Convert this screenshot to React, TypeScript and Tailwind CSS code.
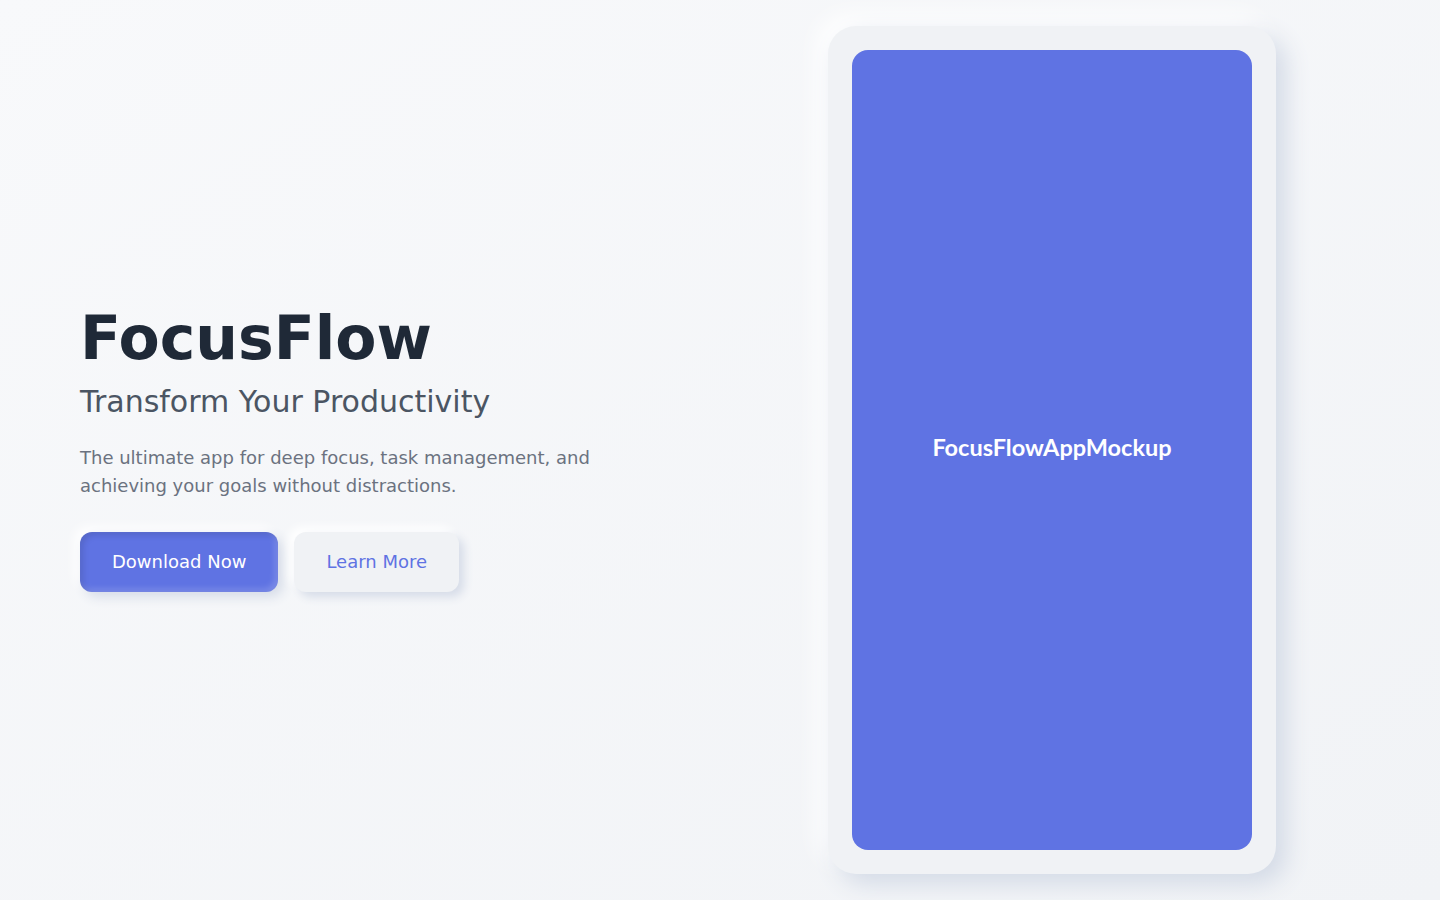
export default function App() {
  return (
    <main className="min-h-screen w-full bg-gradient-to-br from-[#f8f9fb] to-[#f1f3f6] font-['DejaVu_Sans',sans-serif]">
      <div className="grid h-[900px] grid-cols-2 items-center gap-12 px-20">
        <section className="flex flex-col">
          <h1 className="text-6xl font-bold text-[#1f2937]">FocusFlow</h1>
          <h2 className="mt-4 text-3xl text-[#4b5563]">Transform Your Productivity</h2>
          <p className="mt-6 max-w-xl text-lg leading-7 text-[#6b7280]">
            The ultimate app for deep focus, task management, and achieving your goals without distractions.
          </p>
          <div className="mt-8 flex gap-4">
            <button className="h-[60px] rounded-xl bg-[#5f73e3] px-8 text-lg text-white shadow-[inset_3px_3px_6px_rgba(0,0,0,0.12),inset_-3px_-3px_6px_rgba(255,255,255,0.18),5px_5px_12px_#d6dce8,-5px_-5px_12px_#ffffff]">
              Download Now
            </button>
            <button className="h-[60px] rounded-xl bg-[#f0f2f5] px-8 text-lg text-[#5f73e3] shadow-[5px_5px_10px_#d6dce8,-5px_-5px_10px_#ffffff]">
              Learn More
            </button>
          </div>
        </section>
        <section className="flex justify-center">
          <div className="rounded-[28px] bg-[#f0f2f5] p-6 shadow-[10px_10px_24px_#d3dae6,-10px_-10px_24px_#ffffff]">
            <div className="flex h-[800px] w-[400px] items-center justify-center rounded-2xl bg-[#5f73e3]">
              <span className="-mt-1 font-['Lato',sans-serif] text-[23.5px] font-bold text-white">FocusFlowAppMockup</span>
            </div>
          </div>
        </section>
      </div>
    </main>
  );
}
